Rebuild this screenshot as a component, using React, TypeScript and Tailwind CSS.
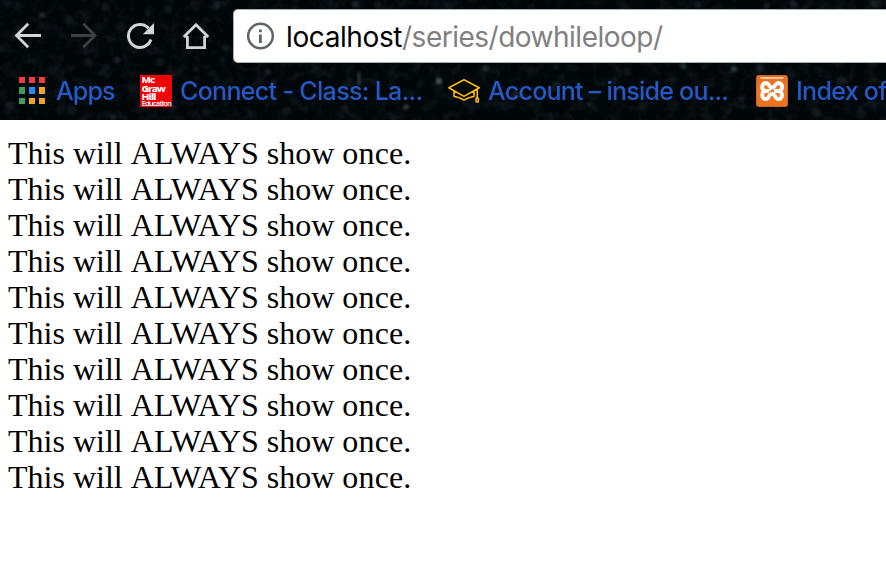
import type { ReactNode } from "react";

const UI_FONT = "font-['Inter','Roboto',sans-serif]";

// Faint specks of the night-sky browser theme: x, y, radius, opacity.
const stars: [number, number, number, number][] = [
  [42, 15, 2.5, 0.35], [14, 37, 3, 0.18], [68, 19, 4, 0.12], [117, 60, 3, 0.25],
  [121, 27, 5, 0.1], [88, 62, 4, 0.15], [52, 70, 5, 0.1], [105, 7, 4, 0.13],
  [168, 9, 4, 0.14], [216, 5, 4, 0.14], [226, 48, 4, 0.12], [160, 62, 4, 0.15],
  [196, 69, 3, 0.12], [10, 106, 5, 0.15], [113, 117, 3, 0.22], [72, 110, 5, 0.1],
  [132, 87, 5, 0.1], [206, 112, 4, 0.1], [355, 4, 3, 0.28], [378, 5, 4, 0.14],
  [268, 72, 3, 0.22], [274, 82, 3, 0.16], [439, 81, 3, 0.65], [406, 107, 2.8, 0.4],
  [345, 108, 4, 0.14], [288, 111, 4, 0.1], [486, 68, 3, 0.25], [516, 95, 5, 0.18],
  [556, 87, 5, 0.13], [589, 104, 2, 0.3], [556, 67, 3, 0.15], [627, 72, 4, 0.1],
  [683, 66, 3, 0.25], [734, 69, 2.8, 0.48], [760, 67, 4, 0.12], [841, 81, 5, 0.16],
  [698, 5, 3, 0.14], [767, 6, 3, 0.2], [794, 5, 4, 0.17], [877, 3, 5, 0.14],
  [816, 112, 5, 0.12], [861, 114, 5, 0.1], [742, 98, 4, 0.11], [643, 106, 5, 0.1],
];

function StarField() {
  return (
    <svg className="absolute inset-0" width="886" height="120" aria-hidden="true">
      <defs>
        <filter id="glow" x="-5%" y="-5%" width="110%" height="110%"><feGaussianBlur stdDeviation="1.6" /></filter>
        <filter id="dust" x="0" y="0" width="100%" height="100%">
          <feTurbulence type="fractalNoise" baseFrequency="0.09" numOctaves="3" seed="8" />
          <feColorMatrix values="0 0 0 0 .15  0 0 0 0 .3  0 0 0 0 .32  1.8 0 0 0 -.83" />
        </filter>
      </defs>
      <rect width="886" height="120" filter="url(#dust)" opacity="0.16" />
      <g filter="url(#glow)" fill="#71898b">
        {stars.map(([x, y, r, o]) => <circle key={`${x}-${y}`} cx={x} cy={y} r={r} opacity={o} />)}
        <path d="M359 72v13" stroke="#91a5a6" strokeWidth="2" opacity=".45" />
      </g>
    </svg>
  );
}

function BackIcon() {
  return <svg width="28" height="28" viewBox="0 0 28 28" fill="none" stroke="#d2d4d5" strokeWidth="2.8"><path d="M27 13.5H3M14.2 1.8 2.5 13.5l11.7 11.7" /></svg>;
}

function ForwardIcon() {
  return <svg width="28" height="28" viewBox="0 0 28 28" fill="none" stroke="#3c4042" strokeWidth="2.8"><path d="M1 13.5h24M13.3 1.8 25 13.5 13.3 25.2" /></svg>;
}

function ReloadIcon() {
  return (
    <svg width="28" height="28" viewBox="0 0 28 28">
      <path d="M22.5 6.2A11.5 11.5 0 1 0 24.9 17.6" fill="none" stroke="#d2d4d5" strokeWidth="3" />
      <path d="M28 1v11.2H16.8z" fill="#d2d4d5" />
    </svg>
  );
}

function HomeIcon() {
  return <svg width="28" height="28" viewBox="0 0 28 28" fill="none" stroke="#d2d4d5" strokeWidth="2.8"><path d="M5.4 14v11.6h17.2V14M1.7 14.9 14 2.7l12.3 12.2M2.5 14h3M22.5 14h3" /></svg>;
}

function InfoIcon() {
  return (
    <svg width="28" height="28" viewBox="0 0 28 28" className="shrink-0">
      <circle cx="13.5" cy="14" r="12.3" fill="none" stroke="#5f6368" strokeWidth="2.5" />
      <path d="M12 7.5h2.8v2.8H12zM12 12.5h2.8V21H12z" fill="#5f6368" />
    </svg>
  );
}

function AppsIcon() {
  return (
    <div className="-mt-px grid h-[27px] w-[26px] shrink-0 grid-cols-3 gap-1">
      <i className="bg-[#f33b3e]" /><i className="bg-[#f33b3e]" /><i className="bg-[#f33b3e]" />
      <i className="bg-[#3f9d59]" /><i className="bg-[#258bf0]" /><i className="bg-[#f1a32b]" />
      <i className="bg-[#3f9d59]" /><i className="bg-[#f1a32b]" /><i className="bg-[#f1a32b]" />
    </div>
  );
}

function McGrawIcon() {
  return (
    <svg width="32" height="32" viewBox="0 0 32 32" className="shrink-0">
      <path fill="#f50007" d="M0 0h32v32H0z" />
      <g className="font-['Noto_Sans',sans-serif] font-bold" fill="#fff" stroke="#fff" strokeWidth=".2">
        <text x="1.5" y="8.2" fontSize="9" textLength="13" lengthAdjust="spacingAndGlyphs">Mc</text>
        <text x="1.5" y="16.5" fontSize="9" textLength="23.5" lengthAdjust="spacingAndGlyphs">Graw</text>
        <text x="1.5" y="24.5" fontSize="9" textLength="14" lengthAdjust="spacingAndGlyphs">Hill</text>
        <text x="1.5" y="30.7" fontSize="6.7" className="font-semibold" strokeWidth="0" textLength="29.5" lengthAdjust="spacingAndGlyphs">Education</text>
      </g>
    </svg>
  );
}

function GraduationIcon() {
  return (
    <svg width="32" height="32" viewBox="0 0 32 32" fill="none" stroke="#fbba0d" strokeWidth="1.6" strokeLinejoin="round" className="shrink-0">
      <path d="M.8 12.8 16 4.8l15.2 8L16 21.4zM6 16v5.2c3.4 1.2 7 2 10 3.9 3-1.9 6.6-2.7 10-3.9V16M29.2 14v8M29.2 22l-1.3 2.3.4 2.7h1.8l.4-2.7z" />
    </svg>
  );
}

function XamppIcon() {
  return (
    <svg width="32" height="32" viewBox="0 0 32 32" className="shrink-0">
      <defs><linearGradient id="orange" x2="0" y2="1"><stop stopColor="#e17022" /><stop offset=".5" stopColor="#f27725" /><stop offset="1" stopColor="#ec711f" /></linearGradient></defs>
      <rect x=".5" y=".5" width="31" height="31" rx="2" fill="url(#orange)" stroke="#c9652b" />
      <path d="M3.5 2h25l-2 2h-21z" fill="#ffc391" />
      <path d="M13 16H9.2C5.2 15.6 5 8 9.6 8c3.9 0 3 4.6 6.4 4.6S19 8 22.5 8c4.8 0 4.6 7.6.4 8.1 4.2.5 3.9 8-.4 8-4 0-2.7-5.2-6.5-5.2s-2.3 5.2-6.4 5.2c-4.5 0-4.3-7.7-.4-8.1M13 16v-1.8M18 16h4" fill="none" stroke="#fff" strokeWidth="3.9" strokeLinejoin="round" />
    </svg>
  );
}

function Bookmark({ icon, label, className }: { icon: ReactNode; label: string; className: string }) {
  return (
    <div className={`flex shrink-0 items-center ${className}`}>
      {icon}
      <span className="whitespace-nowrap">{label}</span>
    </div>
  );
}

export default function App() {
  return (
    <main className="h-[570px] w-[886px] overflow-hidden bg-white">
      <header className="relative h-[120px] overflow-hidden bg-[#010609]">
        <StarField />
        <div className="relative flex h-[63px] items-start pl-[14px]">
          <nav className="flex w-[219px] shrink-0 gap-7 pt-[22px]"><BackIcon /><ForwardIcon /><ReloadIcon /><HomeIcon /></nav>
          <div className="mt-[9px] flex h-[54px] flex-1 items-center rounded-l-[5px] border border-r-0 border-[#a9acae] bg-white pl-[13px]">
            <InfoIcon />
            <div className={`${UI_FONT} ml-[11px] whitespace-nowrap pt-[2px] text-[28px] leading-9 text-black`}>
              <span className="tracking-[-0.4px]">localhost</span><span className="tracking-[-0.5px] text-[#808080]">/series/dowhileloop/</span>
            </div>
          </div>
        </div>
        <nav className={`${UI_FONT} relative flex h-[56px] items-center pl-[19px] text-[25px] font-medium leading-8 text-[#2459c7]`}>
          <Bookmark icon={<AppsIcon />} label="Apps" className="w-[121px] gap-[11px] tracking-[-0.85px]" />
          <Bookmark icon={<McGrawIcon />} label="Connect - Class: La..." className="w-[308px] gap-2 tracking-[-0.67px]" />
          <Bookmark icon={<GraduationIcon />} label="Account – inside ou..." className="w-[308px] gap-2 tracking-[-0.75px]" />
          <Bookmark icon={<XamppIcon />} label="Index of" className="gap-2 tracking-[-0.7px]" />
        </nav>
      </header>
      <section className="px-2 pt-[15px] font-['Liberation_Serif',serif] text-[32px] leading-9 text-black">
        {Array.from({ length: 10 }, (_, index) => (
          <p key={index}>This will <span className="ml-[0.1px]">ALWAYS</span> show <span className="tracking-[0.15px]">once.</span></p>
        ))}
      </section>
    </main>
  );
}
